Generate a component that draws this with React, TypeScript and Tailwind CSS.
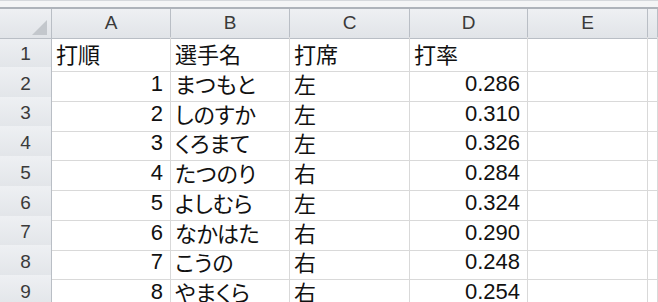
import React from 'react';

interface Row {
    order: string;
    name: string;
    side: string;
    avg: string;
}

const rows: Row[] = [
    { order: '', name: '', side: '', avg: '' },
    { order: '1', name: 'まつもと', side: '左', avg: '0.286' },
    { order: '2', name: 'しのすか', side: '左', avg: '0.310' },
    { order: '3', name: 'くろまて', side: '左', avg: '0.326' },
    { order: '4', name: 'たつのり', side: '右', avg: '0.284' },
    { order: '5', name: 'よしむら', side: '左', avg: '0.324' },
    { order: '6', name: 'なかはた', side: '右', avg: '0.290' },
    { order: '7', name: 'こうの', side: '右', avg: '0.248' },
    { order: '8', name: 'やまくら', side: '右', avg: '0.254' },
];

const columns = ['A', 'B', 'C', 'D', 'E'];

const gridCols = 'grid-cols-[52px_119px_119px_120px_118px_120px_1fr]';
const jp = "font-['Noto_Sans_CJK_JP',sans-serif] [font-feature-settings:'palt']";
const num = "font-['Liberation_Sans',sans-serif]";

function HeaderCell({ children }: { children?: React.ReactNode }) {
    return (
        <div className={`flex items-center justify-center border-r border-b border-[#b9bec5] bg-gradient-to-b from-[#eef0f3] to-[#e1e4e8] text-[19px] text-[#3a3a3a] ${num}`}>
            {children}
        </div>
    );
}

function Cell({ children, right, font }: { children?: React.ReactNode; right?: boolean; font?: string }) {
    return (
        <div
            className={`flex items-end border-r border-b border-[#d9d9d9] pb-[1px] text-[#111] ${
                right ? 'justify-end pr-[7px] text-[22px]' : 'justify-start pl-[4px] text-[22px]'
            } ${font ?? jp}`}
        >
            {children}
        </div>
    );
}

export default function App() {
    const body = [
        { order: '打順', name: '選手名', side: '打席', avg: '打率', head: true },
        ...rows.slice(1).map((r) => ({ ...r, head: false })),
    ];

    return (
        <div className="w-[658px] h-[302px] overflow-hidden bg-white">
            {/* formula bar edge */}
            <div className="h-[9px] bg-[#f4f5f6] border-t border-[#d5d8dc] border-b-2 border-b-[#aeb3ba]" />

            {/* column headers */}
            <div className={`grid ${gridCols} h-[28px]`}>
                <div className="relative border-r border-b border-[#b9bec5] bg-gradient-to-b from-[#eef0f3] to-[#e1e4e8]">
                    <svg className="absolute right-[4px] bottom-[3px]" width="15" height="15" viewBox="0 0 15 15">
                        <polygon points="15,0 15,15 0,15" fill="#c3c7cc" />
                    </svg>
                </div>
                {columns.map((c) => (
                    <HeaderCell key={c}>{c}</HeaderCell>
                ))}
                <HeaderCell />
            </div>

            {/* sheet rows */}
            {body.map((r, i) => (
                <div key={i} className={`grid ${gridCols} h-[29.75px]`}>
                    <HeaderCell>{i + 1}</HeaderCell>
                    {r.head ? <Cell>{r.order}</Cell> : <Cell right font={num}>{r.order}</Cell>}
                    <Cell>{r.name}</Cell>
                    <Cell>{r.side}</Cell>
                    {r.head ? <Cell>{r.avg}</Cell> : <Cell right font={num}>{r.avg}</Cell>}
                    <Cell />
                    <Cell />
                </div>
            ))}
        </div>
    );
}
